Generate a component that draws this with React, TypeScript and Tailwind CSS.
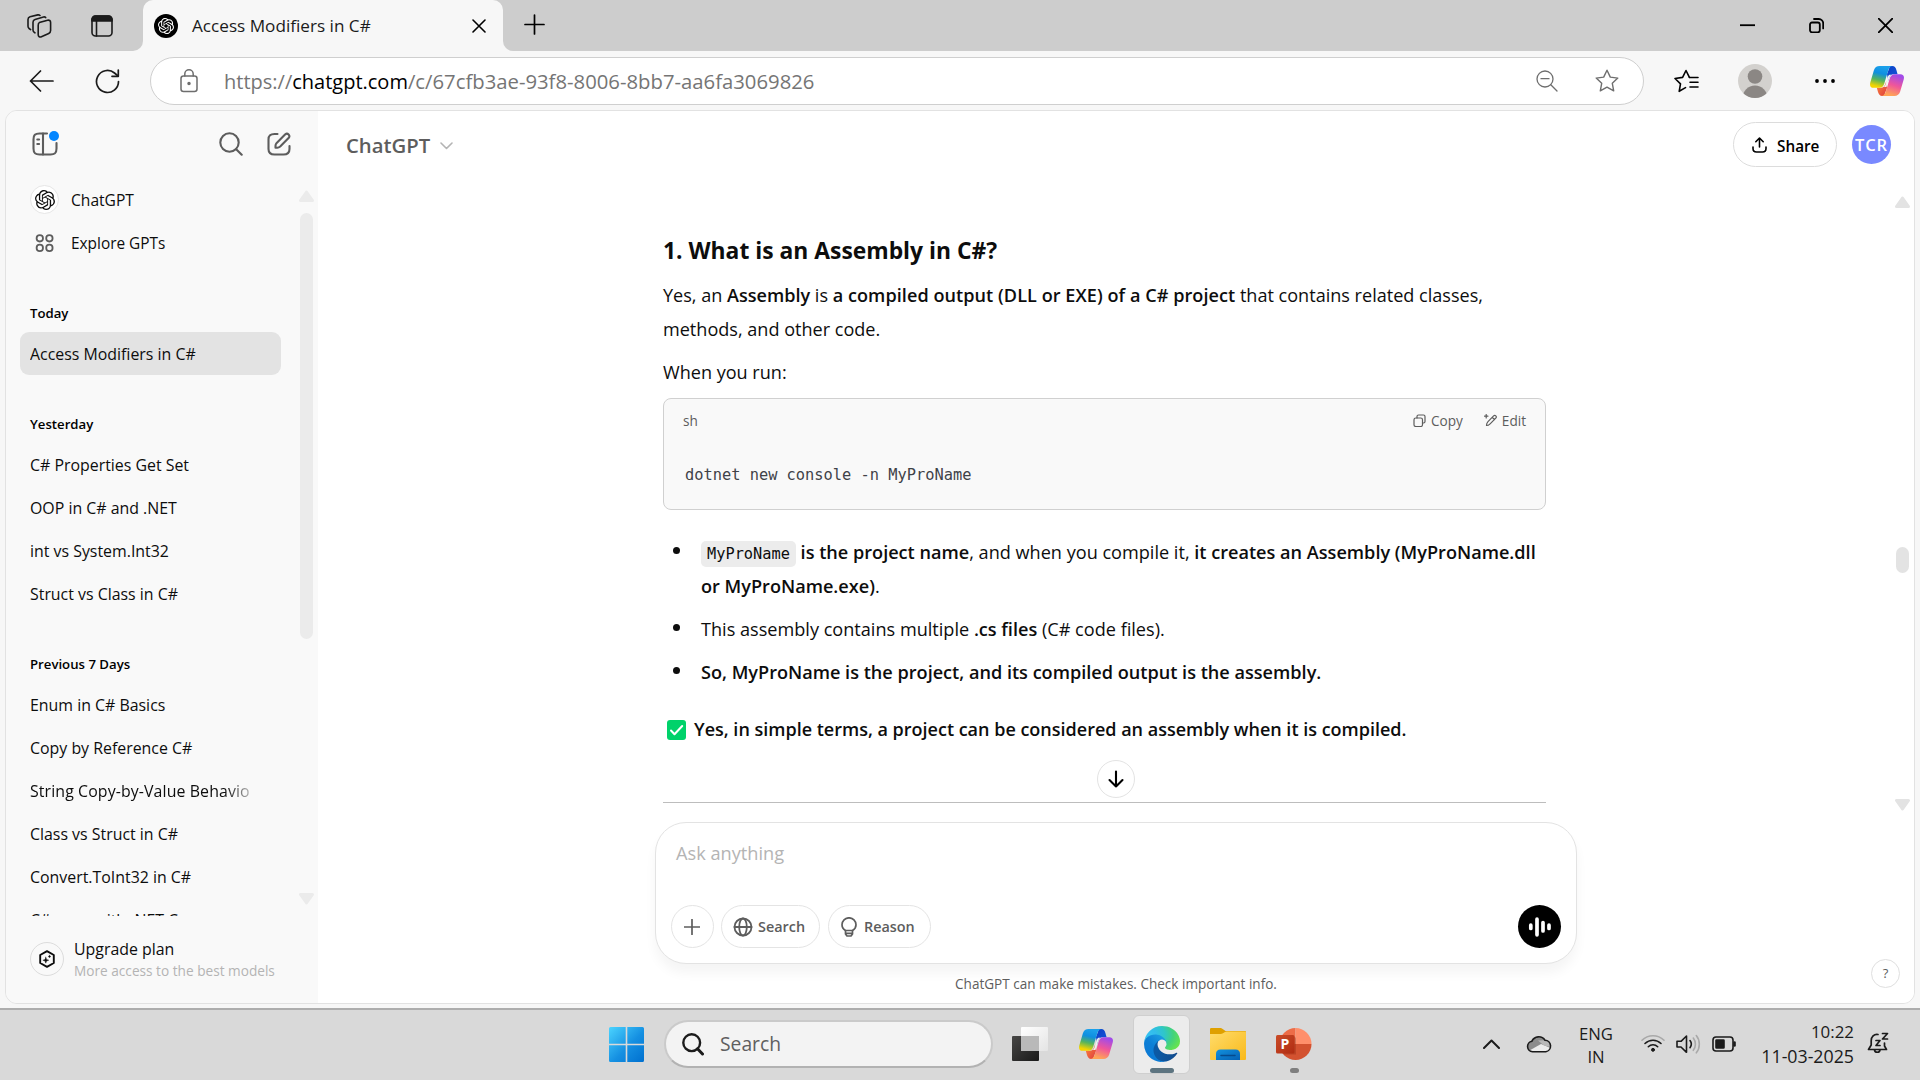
import type { ReactNode } from "react";
import { SiOpenai } from "react-icons/si";

type IconProps = { className?: string };

function Stroke({ className = "", box = "0 0 24 24", width = 1.5, children }: IconProps & { box?: string; width?: number; children: ReactNode }) {
  return (
    <svg className={"shrink-0 " + className} viewBox={box} fill="none" stroke="currentColor" strokeWidth={width} strokeLinecap="round" strokeLinejoin="round">
      {children}
    </svg>
  );
}

function CopilotLogo({ className = "", id }: IconProps & { id: string }) {
  return (
    <svg className={"shrink-0 " + className} viewBox="0 0 34 30">
      <defs>
        <linearGradient id={id + "a"} x1="0.6" y1="0" x2="0.35" y2="1">
          <stop offset="0.05" stopColor="#1ba0ea" />
          <stop offset="0.35" stopColor="#0f8fe0" />
          <stop offset="0.65" stopColor="#57b45c" />
          <stop offset="0.95" stopColor="#f5d400" />
        </linearGradient>
        <linearGradient id={id + "b"} x1="0.7" y1="0" x2="0.35" y2="1">
          <stop offset="0.05" stopColor="#a24be8" />
          <stop offset="0.5" stopColor="#f0569a" />
          <stop offset="0.95" stopColor="#ffa457" />
        </linearGradient>
        <linearGradient id={id + "c"} x1="0" y1="0" x2="1" y2="1">
          <stop offset="0" stopColor="#0c3fc4" />
          <stop offset="1" stopColor="#1458dc" />
        </linearGradient>
        <linearGradient id={id + "d"} x1="0" y1="0" x2="1" y2="1">
          <stop offset="0" stopColor="#ff8a3c" />
          <stop offset="1" stopColor="#dd3c3f" />
        </linearGradient>
      </defs>
      <path d="M20 0h2.200c2.400 0 3.500 1.600 4.200 4l1.200 4.200h-4c-2.600 0-3.800 1.600-4.500 3.700l-1 3L17 8z" fill={`url(#${id}c)`} />
      <path d="M14 30h-1.800c-2.400 0-3.500-1.700-4.200-4l-1.200-4.300h4c2.600 0 3.800-1.600 4.500-3.700l1-3L17 22z" fill={`url(#${id}d)`} />
      <path d="M9.600 0H22.500c-2.600.3-3.700 2.400-4.400 4.700L14.300 17.500c-.8 2.700-2.300 4.300-5 4.300H3.600C.5 21.800-.5 19.600.3 16.500L3.900 4.200C4.700 1.500 6.700 0 9.600 0z" fill={`url(#${id}a)`} />
      <path d="M24.400 30H11.500c2.600-.3 3.700-2.400 4.400-4.700l3.800-12.800c.8-2.700 2.300-4.300 5-4.300h5.700c3.100 0 4.100 2.200 3.300 5.300l-3.600 12.300c-.8 2.700-2.800 4.200-5.700 4.200z" fill={`url(#${id}b)`} />
      <path d="M19.300 8.800h2c-1.200 1-1.800 2.200-2.300 3.700l-2.600 8.600h-2.700c1-.8 1.600-2 2-3.400l2-6.600c.3-1 .8-1.800 1.600-2.300z" fill="#f1f1f1" />
    </svg>
  );
}

function EdgeLogo({ className = "" }: IconProps) {
  return (
    <svg className={"shrink-0 " + className} viewBox="0 0 256 256">
      <defs>
        <linearGradient id="edgeA" x1="0.2" y1="0.5" x2="1" y2="0.5">
          <stop offset="0" stopColor="#0c59a4" />
          <stop offset="1" stopColor="#114a8b" />
        </linearGradient>
        <linearGradient id="edgeB" x1="0.9" y1="0.2" x2="0.3" y2="1">
          <stop offset="0" stopColor="#1b9de2" />
          <stop offset="0.5" stopColor="#0d7fd6" />
          <stop offset="1" stopColor="#0a78d4" />
        </linearGradient>
        <radialGradient id="edgeC" cx="0.1" cy="0.35" r="0.95">
          <stop offset="0" stopColor="#35c1f1" />
          <stop offset="0.25" stopColor="#32bdea" />
          <stop offset="0.5" stopColor="#2fc6c8" />
          <stop offset="0.75" stopColor="#43d27c" />
          <stop offset="1" stopColor="#66e34f" />
        </radialGradient>
      </defs>
      <path fill="url(#edgeA)" d="M231.100 190.500c-3.400 1.800-6.900 3.400-10.500 4.700a101.900 101.900 0 0 1-35.900 6.500c-47.300 0-88.500-32.500-88.500-74.300a31.500 31.500 0 0 1 16.400-27.300c-42.800 1.800-53.800 46.400-53.800 72.500 0 73.900 68.100 81.400 82.800 81.400 7.900 0 19.800-2.300 27-4.600l1.300-.4a128.300 128.300 0 0 0 66.600-52.800 4 4 0 0 0-5.400-5.700z" />
      <path fill="url(#edgeB)" d="M105.700 241.400a79.200 79.200 0 0 1-22.700-21.300 80.700 80.700 0 0 1 29.600-120c3.100-1.500 8.500-4.100 15.600-4a32.400 32.400 0 0 1 25.700 13 31.900 31.900 0 0 1 6.300 18.700c0-.2 24.500-79.600-80-79.600-43.900 0-80 41.700-80 78.200a130.200 130.200 0 0 0 12.100 56 128 128 0 0 0 156.400 67.100 75.600 75.600 0 0 1-62.800-8.100z" />
      <path fill="url(#edgeC)" d="M152.300 148.900c-.9 1-3.300 2.500-3.300 5.700 0 2.600 1.700 5.100 4.700 7.200 14.400 10 41.500 8.700 41.600 8.700a59.600 59.600 0 0 0 30.300-8.300 61.400 61.400 0 0 0 30.400-52.900c.3-22.400-8-37.300-11.300-43.900C223.500 23.900 177.700 0 128 0A128 128 0 0 0 0 126.200c.5-36.500 36.800-66 80-66 3.500 0 23.500.3 42 10.100 16.300 8.600 24.900 18.900 30.800 29.200 6.200 10.700 7.300 24.100 7.300 29.500s-2.700 13.300-7.800 19.900z" />
    </svg>
  );
}

function Triangle({ className = "", down = false }: IconProps & { down?: boolean }) {
  return (
    <svg className={"shrink-0 h-3 w-[15px] " + className} viewBox="0 0 15 12" fill="currentColor" stroke="currentColor" strokeWidth="3" strokeLinejoin="round">
      <path d={down ? "M1.500 1.500h12l-6 8.500z" : "M1.500 10.500h12l-6-8.500z"} />
    </svg>
  );
}

function TitleBar() {
  return (
    <div className="flex h-[51px] shrink-0 bg-[linear-gradient(#cdcdcd_50%,#f7f7f7_50%)]">
      <div className="flex w-[143px] rounded-br-[10px] bg-[#cdcdcd] pt-[14px] pl-[27px] text-[#1b1b1b]">
        <Stroke box="0 0 25 24" width={1.6} className="h-6 w-[25px]">
          <path d="M12.300 8.600l8.300-2.400c1.600-.4 3 .5 3 2.200v8.200c0 1.300-.6 2.300-1.900 2.900l-7.300 3.300c-1.600.7-3.200-.3-3.200-2v-9.200c0-1.500.2-2.500 1.100-3z" />
          <path d="M8 18.800l-1-.7c-.7-.5-1-1.100-1-2V8.300c0-1.600.7-2.500 2-2.900l8.500-2.400c.9-.2 1.700 0 2.200.6" />
          <path d="M3.600 15.600l-1.500-1.100c-.8-.6-1.100-1.200-1.100-2.200V5.500c0-1.500.7-2.400 2-2.800L10.800.9c.9-.2 1.600 0 2.200.6" />
        </Stroke>
        <Stroke box="0 0 22 22" width={1.6} className="mt-px ml-[39px] size-[22px]">
          <rect x="1" y="1" width="20" height="20" rx="3.500" />
          <path d="M1 6V4.500A3.500 3.500 0 0 1 4.500 1h13A3.500 3.500 0 0 1 21 4.500V6z" fill="currentColor" />
          <path d="M5.500 6v15" />
        </Stroke>
      </div>
      <div className="flex w-[360px] items-center rounded-t-[10px] bg-[#f7f7f7] pr-[17px] pl-[11px]">
        <span className="flex size-6 items-center justify-center rounded-full bg-black text-white">
          <SiOpenai className="size-4" />
        </span>
        <span className="mt-px ml-[14px] flex-1 text-[17.150px] whitespace-nowrap text-[#1b1b1b]">Access Modifiers in C#</span>
        <Stroke box="0 0 14 14" width={1.6} className="mt-px size-[14px]">
          <path d="M1 1l12 12M13 1L1 13" />
        </Stroke>
      </div>
      <div className="flex flex-1 rounded-bl-[10px] bg-[#cdcdcd] pl-[21px] text-black">
        <Stroke box="0 0 21 21" width={1.7} className="mt-[14px] size-[21px]">
          <path d="M10.500 1v19M1 10.500h19" />
        </Stroke>
        <div className="ml-auto flex gap-[54px] pt-[18px] pr-[27px]">
          <Stroke box="0 0 15 15" width={1.8} className="size-[15px]">
            <path d="M0 7.200h15" strokeLinecap="butt" />
          </Stroke>
          <Stroke box="0 0 15 15" width={1.8} className="size-[15px]">
            <rect x="1" y="4.500" width="9.800" height="9.800" rx="2" />
            <path d="M5 1h4.800a4.400 4.400 0 0 1 4.400 4.400v5" />
          </Stroke>
          <Stroke box="0 0 15 15" width={1.8} className="size-[15px]">
            <path d="M.7.7l13.600 13.600M14.300.7L.7 14.300" />
          </Stroke>
        </div>
      </div>
    </div>
  );
}

function Toolbar() {
  return (
    <div className="flex h-[59px] shrink-0 items-start pt-[6px] text-[#1b1b1b]">
      <div className="flex h-12 w-[150px] items-center pl-[29px]">
        <Stroke box="0 0 25 22" width={1.7} className="-mt-px h-[22px] w-[25px]">
          <path d="M24 11H1.500M11.500 1L1.500 11l10 10" />
        </Stroke>
        <Stroke box="0 0 25 25" width={1.7} className="ml-[41px] size-[25px]">
          <path d="M23.500 12.500a11 11 0 1 1-4-8.500l3.500 3" />
          <path d="M23.300 1v6.300h-6.300" />
        </Stroke>
      </div>
      <div className="flex h-12 w-[1494px] items-center rounded-full border border-[#cfcfcf] bg-white pl-[29px] text-[#6e6e6e]">
        <Stroke box="0 0 18 24" width={1.5} className="h-6 w-[18px]">
          <rect x="1" y="7" width="16" height="15.500" rx="2.500" />
          <path d="M4.800 7V5a4.200 4.200 0 0 1 8.400 0v2" />
          <circle cx="9" cy="14.500" r="1" fill="currentColor" />
        </Stroke>
        <span className="ml-[26px] flex-1 text-[20px] whitespace-nowrap text-[#757575]">
          https://<span className="text-black">chatgpt.com</span>
          <span className="text-[20.300px]">/c/67cfb3ae-93f8-8006-8bb7-aa6fa3069826</span>
        </span>
        <Stroke box="0 0 22 22" width={1.3} className="size-[22px]">
          <circle cx="9" cy="9" r="8" />
          <path d="M5 8.700h8M14.800 14.800l6.200 6.200" />
        </Stroke>
        <Stroke box="0 0 24 24" width={1.4} className="mr-6 ml-[37px] size-6">
          <path d="M12 1.200l3.300 6.900 7.500 1-5.500 5.200 1.400 7.500-6.700-3.600-6.700 3.600 1.400-7.500L1.200 9.100l7.500-1z" />
        </Stroke>
      </div>
      <div className="flex h-12 items-center text-black">
        <Stroke box="0 0 25 24" width={1.6} className="ml-[30px] h-6 w-[25px]">
          <path d="M11.500 18.600l-6.300 3.700 1.300-7.500L1 9.500l7.600-1.100L12 1.500l3.400 6.900" />
          <path d="M15.500 8.500h8.500M16 13.300h8M16 18h8" />
        </Stroke>
        <svg viewBox="0 0 34 34" className="ml-[39px] size-[34px]">
          <clipPath id="profile"><circle cx="17" cy="17" r="17" /></clipPath>
          <g clipPath="url(#profile)">
            <rect width="34" height="34" fill="#d3d1ce" />
            <circle cx="17" cy="12.500" r="7.300" fill="#8b8784" />
            <circle cx="17" cy="34" r="12.500" fill="#8b8784" />
          </g>
        </svg>
        <svg viewBox="0 0 20 4" className="ml-[43px] h-1 w-5">
          <circle cx="2" cy="2" r="1.900" /><circle cx="10" cy="2" r="1.900" /><circle cx="18" cy="2" r="1.900" />
        </svg>
        <CopilotLogo id="cpTop" className="ml-[35px] h-[30px] w-[34px]" />
      </div>
    </div>
  );
}

const yesterday = ["C# Properties Get Set", "OOP in C# and .NET", "int vs System.Int32", "Struct vs Class in C#"];
const previous = ["Enum in C# Basics", "Copy by Reference C#", "String Copy-by-Value Behavior", "Class vs Struct in C#", "Convert.ToInt32 in C#", "C# apps with .NET Core"];

function Chat({ title, active = false }: { title: string; active?: boolean }) {
  return (
    <div className={"ml-[14px] flex h-[43px] w-[261px] shrink-0 items-center rounded-[9px] px-[10px] " + (active ? "bg-[#e3e3e3]" : "")}>
      <span className={"mt-0.5 w-[221px] overflow-hidden whitespace-nowrap " + (title.length > 26 ? "tracking-[0.1px] [mask-image:linear-gradient(to_right,black_88%,transparent_104%)]" : "")}>{title}</span>
    </div>
  );
}

function Section({ title, children }: { title: string; children: ReactNode }) {
  return (
    <div className="mt-7">
      <h2 className="flex h-10 items-center pt-[3px] pl-6 text-[13.200px] font-semibold text-black">{title}</h2>
      {children}
    </div>
  );
}

function Sidebar() {
  return (
    <aside className="flex w-[312px] shrink-0 flex-col bg-[#f9f9f9] text-[15.900px] text-[#0d0d0d]">
      <div className="flex h-[67px] shrink-0 items-center pl-[26px] text-[#5d5d5d]">
        <div className="relative size-[26px]">
          <Stroke box="0 0 26 24" width={2.1} className="h-6 w-[26px]">
            <path d="M15 1.500H7.500c-4.500 0-6 1.500-6 6v9c0 4.500 1.500 6 6 6h11c4.500 0 6-1.500 6-6V11" />
            <path d="M11 1.500v21" />
            <path d="M5.300 7.500h1.800M5.300 12h1.800" />
          </Stroke>
          <span className="absolute -top-[1px] left-[17px] size-[10px] rounded-full bg-[#0285ff]" />
        </div>
        <Stroke box="0 0 24 24" width={2.100} className="-mt-px ml-[161px] size-6">
          <circle cx="10.500" cy="10.500" r="9.200" />
          <path d="M17.200 17.200l5.500 5.500" />
        </Stroke>
        <Stroke box="0 0 24 24" width={2.100} className="-mt-px ml-[24px] size-6">
          <path d="M10.500 2H7.500C3.500 2 1.500 3.500 1.500 7.500v9.500c0 4 2 5.500 6 5.500h9c4 0 6-1.500 6-5.500v-3" />
          <path d="M8.500 13.800c0-1.200.4-2 1.200-2.900L18.300 2.300a2.500 2.500 0 0 1 3.500 3.500L13.200 14.500c-.9.8-1.700 1.200-2.900 1.200H8.500z" />
        </Stroke>
      </div>
      <div className="flex h-[738px] shrink-0 overflow-hidden">
        <div className="w-[293px]">
          <div className="flex h-[43px] items-center pl-6">
            <span className="flex size-[29px] items-center justify-center rounded-full border border-[#e6e6e6] bg-white">
              <SiOpenai className="size-5" />
            </span>
            <span className="mt-0.5 ml-3 text-[15.600px]">ChatGPT</span>
          </div>
          <div className="flex h-[43px] items-center pl-6">
            <Stroke box="0 0 28 28" width={1.8} className="size-7 text-[#5d5d5d]">
              <circle cx="9.800" cy="9.300" r="3.200" /><circle cx="19.400" cy="9.300" r="3.200" />
              <circle cx="9.800" cy="18.900" r="3.200" /><circle cx="19.400" cy="18.900" r="3.200" />
            </Stroke>
            <span className="mt-[3px] ml-[13px] text-[15.400px]">Explore GPTs</span>
          </div>
          <Section title="Today"><Chat title="Access Modifiers in C#" active /></Section>
          <Section title="Yesterday">{yesterday.map((t) => <Chat key={t} title={t} />)}</Section>
          <Section title="Previous 7 Days">{previous.map((t) => <Chat key={t} title={t} />)}</Section>
        </div>
        <div className="flex w-[15px] flex-col items-center pt-3 text-[#ebebeb]">
          <Triangle />
          <div className="mt-[11px] h-[426px] w-[13px] rounded-full bg-[#ebebeb]" />
          <Triangle down className="mt-auto mb-[11px]" />
        </div>
      </div>
      <div className="flex flex-1 items-center pl-6">
        <span className="-mt-px flex size-[34px] items-center justify-center rounded-full border border-[#dcdcdc] text-[#0d0d0d]">
          <Stroke box="0 0 18 18" width={1.9} className="size-[18px]">
            <path d="M9 1.200l6.800 3.800v8L9 16.800 2.200 13V5z" />
            <path d="M7.800 7.200l.8 2.200 2.200.8-2.200.8-.8 2.200-.8-2.200-2.200-.8L7 9.400zM11.500 5.200l.4.900.9.400-.9.400-.4.900-.4-.9-.9-.4.900-.4z" fill="currentColor" strokeWidth=".4" />
          </Stroke>
        </span>
        <div className="mt-px ml-[10px] flex flex-col">
          <span className="h-[21px] leading-[21px]">Upgrade plan</span>
          <span className="h-[21px] text-[13.650px] leading-[21px] text-[#b4b4b4]">More access to the best models</span>
        </div>
      </div>
    </aside>
  );
}

function B({ children }: { children: ReactNode }) {
  return <strong className="font-semibold">{children}</strong>;
}

function Bullet({ children }: { children: ReactNode }) {
  return (
    <li className="flex">
      <span className="mt-3 ml-[10px] size-[7px] shrink-0 rounded-full bg-[#0d0d0d]" />
      <div className="ml-[21px] whitespace-nowrap">{children}</div>
    </li>
  );
}

function Answer() {
  return (
    <article className="w-[883px] pt-[55px] text-[18.070px] leading-[33.600px] text-[#0d0d0d]">
      <h3 className="h-9 text-[22.850px] leading-9 font-bold">1. What is an Assembly in C#?</h3>
      <p className="mt-[10px] whitespace-nowrap">
        Yes, an <B>Assembly</B> is <B><span className="tracking-[0.06px]">a compiled output (DLL or EXE) of a C# project</span></B> that contains related classes,
        <br />methods, and other code.
      </p>
      <p className="mt-[10px]">When you run:</p>
      <div className="mt-[8px] h-[112px] rounded-[8px] border border-[#d0d0d0] bg-[#f9f9f9] text-[#5d5d5d]">
        <div className="flex h-[44px] items-center pr-[19px] pl-[19px] text-[13.600px]">
          <span>sh</span>
          <Stroke box="0 0 13 13" width={1.200} className="ml-auto size-[13px]">
            <rect x="1" y="4" width="8.500" height="8.500" rx="1.800" />
            <path d="M4 4V2.500C4 1.500 4.500 1 5.500 1h5c1 0 1.500.5 1.500 1.500V7.500C12 8.500 11.500 9 10.500 9H9.500" />
          </Stroke>
          <span className="mt-px ml-[5px]">Copy</span>
          <Stroke box="0 0 13 13" width={1.200} className="ml-[21px] size-[13px]">
            <path d="M2.500 11.500c0-2 .3-2.700 1.500-3.900l5.600-5.700a1.500 1.500 0 0 1 2.200 2.200L6.100 9.800c-1.200 1.200-1.700 1.700-3.600 1.700zM8.300 3.300l2.200 2.200" />
            <path d="M2.200.5v3.400M.5 2.200h3.400" />
          </Stroke>
          <span className="mt-px ml-[5px]">Edit</span>
        </div>
        <pre className="mt-[18px] pl-[21px] font-['DejaVu_Sans_Mono',monospace] text-[15.350px] leading-7 text-[#3f4248]">dotnet new console -n MyProName</pre>
      </div>
      <ul className="mt-[25px] flex flex-col gap-[9px] text-[18.110px] leading-[34px]">
        <Bullet>
          <code className="rounded-[5px] bg-[#ececec] px-[6px] py-[4px] font-['DejaVu_Sans_Mono',monospace] text-[15.300px] leading-none">MyProName</code>{" "}
          <B>is the project name</B>, and when you compile it, <B>it creates an Assembly (MyProName.dll<br />or MyProName.exe)</B>.
        </Bullet>
        <Bullet>This assembly contains multiple <B>.cs files</B> (C# code files).</Bullet>
        <Bullet><B>So, MyProName is the project, and its compiled output is the assembly.</B></Bullet>
      </ul>
      <p className="mt-[24px] flex items-center text-[18px] whitespace-nowrap">
        <svg viewBox="0 0 19 20" className="ml-1 h-5 w-[19px]">
          <rect width="19" height="20" rx="3" fill="#00d26a" />
          <path d="M4 10.500l3.500 3.700L15.200 6" fill="none" stroke="#fff" strokeWidth="2" strokeLinecap="round" strokeLinejoin="round" />
        </svg>
        <span className="ml-2"><B>Yes, in simple terms, a project can be considered an assembly when it is compiled.</B></span>
      </p>
      <hr className="mt-[56px] border-[#bdbdbd]" />
    </article>
  );
}

function Pill({ className = "", children }: IconProps & { children: ReactNode }) {
  return <button className={"flex h-[43px] items-center rounded-full border border-[#e4e4e4] text-[14.400px] font-semibold text-[#5d5d5d] " + className}>{children}</button>;
}

function Composer() {
  return (
    <div className="flex h-[181px] shrink-0 flex-col items-center">
      <div className="flex h-[142px] w-[922px] flex-col justify-between rounded-[31px] border border-[#e3e3e3] bg-white pt-[15px] pr-[15px] pb-[15px] pl-[15px] shadow-[0_9px_12px_rgba(0,0,0,0.045)]">
        <div className="pl-[5px] text-[18.200px] leading-[31px] text-[#b4b4b4]">Ask anything</div>
        <div className="flex items-center">
          <Pill className="w-[43px] justify-center pr-px">
            <Stroke box="0 0 16 16" width={1.700} className="size-4"><path d="M8 .5v15M.5 8h15" /></Stroke>
          </Pill>
          <Pill className="ml-[7px] w-[99px] pl-[11px]">
            <Stroke box="0 0 20 20" width={1.800} className="size-5">
              <circle cx="10" cy="10" r="8.500" /><ellipse cx="10" cy="10" rx="3.800" ry="8.500" /><path d="M1.500 10h17" />
            </Stroke>
            <span className="ml-[5px]">Search</span>
          </Pill>
          <Pill className="ml-2 w-[103px] pl-3">
            <Stroke box="0 0 16 20" width={1.700} className="h-5 w-4">
              <path d="M4.500 13.500C2.300 12.200 1 10.200 1 7.800a7 7 0 0 1 14 0c0 2.400-1.300 4.400-3.500 5.700z" />
              <path d="M4.500 13.500v3.500l1.500 2h4l1.500-2v-3.500M4.800 16.300h6.400" />
            </Stroke>
            <span className="ml-[7px]">Reason</span>
          </Pill>
          <button className="ml-auto flex size-[43px] items-center justify-center rounded-full bg-black text-white">
            <Stroke box="0 0 24 20" width={3.700} className="h-5 w-6"><path d="M2.800 8.200v3.300M9 2.200v15.600M15 5.500v8.500M21 8.200v3.300" /></Stroke>
          </button>
        </div>
      </div>
      <p className="mt-[10px] text-[13.550px] leading-5 text-[#5d5d5d]">ChatGPT can make mistakes. Check important info.</p>
    </div>
  );
}

function Main() {
  return (
    <main className="relative flex flex-1 flex-col bg-white">
      <header className="flex h-[67px] shrink-0 items-center pr-[23px] pl-[28px]">
        <span className="mt-px text-[20.300px] font-semibold text-[#5d5d5d]">ChatGPT</span>
        <Stroke box="0 0 13 8" width={1.600} className="mt-[3px] ml-[10px] h-2 w-[13px] text-[#b4b4b4]"><path d="M1 1l5.500 5.500L12 1" /></Stroke>
        <button className="ml-auto flex h-[45px] w-[104px] items-center rounded-full border border-[#dcdcdc] pl-[18px] text-[15.300px] font-semibold">
          <Stroke box="0 0 15 16" width={1.600} className="h-4 w-[15px]"><path d="M7.500 10V1.300M3.800 4.700l3.700-3.700 3.700 3.700M1 10v1.500C1 14 2 15 4.500 15h6c2.500 0 3.500-1 3.500-3.500V10" /></Stroke>
          <span className="mt-[3px] ml-[10px]">Share</span>
        </button>
        <span className="ml-[15px] flex size-[39px] items-center justify-center rounded-full bg-[#7989ff] pt-[2px] text-[16.500px] font-semibold tracking-[0.9px] text-white">TCR</span>
      </header>
      <div className="flex h-[644px] shrink-0 overflow-hidden">
        <div className="flex flex-1 justify-center"><Answer /></div>
        <div className="flex w-[23px] flex-col items-center pt-[18px] text-[#e3e3e3]">
          <Triangle />
          <div className="mt-[339px] h-[26px] w-[13px] rounded-full bg-[#e3e3e3]" />
          <Triangle down className="mt-auto mb-[11px]" />
        </div>
      </div>
      <Composer />
      <button className="absolute top-[649px] left-[779px] flex size-[38px] items-center justify-center rounded-full border border-[#e3e3e3] bg-white">
        <Stroke box="0 0 16 18" width={2.100} className="h-[18px] w-4"><path d="M8 1.500v15M1.500 10L8 16.500 14.500 10" /></Stroke>
      </button>
      <button className="absolute right-[14px] bottom-[15px] flex size-[29px] items-center justify-center rounded-full border border-[#dfdfdf] text-[13px] text-[#5d5d5d]">?</button>
    </main>
  );
}

function Taskbar() {
  return (
    <footer className="flex h-[70px] shrink-0 bg-[#d9d9d9] text-[#1b1b1b]">
      <svg viewBox="0 0 35 35" className="mt-[17px] ml-[609px] size-[35px] shrink-0">
        <defs>
          <linearGradient id="win" gradientUnits="userSpaceOnUse" x1="0" y1="0" x2="35" y2="35">
            <stop offset="0" stopColor="#4bd4ff" /><stop offset="0.55" stopColor="#1590e2" /><stop offset="1" stopColor="#0070cf" />
          </linearGradient>
        </defs>
        <path fill="url(#win)" d="M1.500 0H16.700V16.700H0V1.500A1.500 1.500 0 0 1 1.500 0zM18.300 0h15.200A1.500 1.500 0 0 1 35 1.500V16.700H18.300zM0 18.300h16.700V35H1.500A1.500 1.500 0 0 1 0 33.500zM18.300 18.300H35v15.200a1.500 1.500 0 0 1-1.500 1.500H18.300z" />
      </svg>
      <div className="mt-[10px] ml-[20px] flex h-12 w-[329px] shrink-0 items-center rounded-full border-2 border-[#cacaca] border-b-[#b2b2b2] bg-[#f3f3f3] pl-4">
        <Stroke box="0 0 22 23" width={2.400} className="h-[23px] w-[22px]">
          <circle cx="9.700" cy="9.700" r="8.400" /><path d="M15.500 15.800l5 5.200" strokeWidth="3" />
        </Stroke>
        <span className="mt-px ml-[16px] text-[19.300px] text-[#5f5f5f]">Search</span>
      </div>
      <svg viewBox="0 0 36 34" className="mt-[17px] ml-[19px] h-[34px] w-9 shrink-0">
        <defs>
          <linearGradient id="tvA" x1="0" y1="0" x2="1" y2="1"><stop offset="0" stopColor="#474645" /><stop offset="1" stopColor="#191919" /></linearGradient>
          <linearGradient id="tvB" x1="0" y1="0" x2="1" y2="1"><stop offset="0" stopColor="#fff" /><stop offset="1" stopColor="#e4e4e4" /></linearGradient>
        </defs>
        <rect y="9" width="27" height="25" rx="1" fill="url(#tvA)" />
        <rect x="9" width="27" height="24" rx="1" fill="url(#tvB)" />
        <rect x="9" y="9" width="18" height="15" fill="#b9b9b9" />
      </svg>
      <CopilotLogo id="cpTask" className="mt-[19px] ml-[31px] h-[30px] w-[34px]" />
      <div className="mt-[5px] ml-[20px] flex h-[59px] w-[57px] shrink-0 flex-col items-center rounded-[6px] border border-[#cfcfcf] bg-[#ececec] pt-[10px]">
        <EdgeLogo className="size-9" />
        <span className="mt-[6px] h-[5px] w-6 shrink-0 rounded-full bg-[#5d7480]" />
      </div>
      <svg viewBox="0 0 36 33" className="mt-[18px] ml-5 h-[33px] w-9 shrink-0">
        <defs>
          <linearGradient id="fold" x1="0" y1="0" x2="1" y2="1"><stop offset="0" stopColor="#ffdc6b" /><stop offset="1" stopColor="#f9b91a" /></linearGradient>
          <linearGradient id="foldB" x1="0" y1="0" x2="1" y2="1"><stop offset="0" stopColor="#1292de" /><stop offset="1" stopColor="#0560b4" /></linearGradient>
        </defs>
        <path d="M0 1.200Q0 0 1.200 0H10.500q1 0 1.800.7L15.500 3H35q1 0 1 1v10H0z" fill="#dfa000" />
        <path d="M0 6h10.500q1.500 0 2.500-.8L15 4q.6-.5 1.500-.5H35q1 0 1 1V31q0 1-1 1H1q-1 0-1-1z" fill="url(#fold)" />
        <path d="M6 32V26q0-4.500 4.500-4.500h15Q30 21.500 30 26v6z" fill="url(#foldB)" />
        <path d="M11 27.500h14" stroke="#064a8c" strokeWidth="1.500" strokeLinecap="round" />
      </svg>
      <div className="mt-[18px] ml-[30px] flex w-9 shrink-0 flex-col">
        <div className="relative h-[33px] w-9">
          <svg viewBox="0 0 36 33" className="h-[33px] w-9">
            <defs><linearGradient id="ppt" x1="0" y1="0" x2="1" y2="1"><stop offset="0" stopColor="#ca4c28" /><stop offset="1" stopColor="#b02c12" /></linearGradient></defs>
            <path d="M19.500 0a16 16 0 0 0-16 16h16z" fill="#ed6c47" />
            <path d="M19.500 0a16 16 0 0 1 16 16h-16z" fill="#ff8f6b" />
            <path d="M3.500 16h32a16 16 0 0 1-32 0z" fill="#d35230" />
            <path d="M3.500 9H18.500q1.500 0 1.500 1.500V26.500H8A16 16 0 0 1 3.500 16z" fill="#8f2a10" opacity=".35" />
            <rect y="7" width="18.500" height="18.500" rx="1.500" fill="url(#ppt)" />
          </svg>
          <span className="absolute top-[7px] left-0 w-[18px] text-center text-[14px] leading-[18px] font-bold text-white">P</span>
        </div>
        <span className="mt-[7px] ml-[14px] h-[5px] w-[9px] rounded-full bg-[#7f7f7f]" />
      </div>
      <div className="ml-auto flex items-start text-[16.700px]">
        <Stroke box="0 0 17 10" width={2} className="mt-[29px] h-[10px] w-[17px]"><path d="M1 9l7.500-7.500L16 9" /></Stroke>
        <svg viewBox="0 0 26 18" className="mt-[25px] ml-[26px] h-[18px] w-[26px]">
          <path d="M6.500 16.700a5.300 5.300 0 0 1-.6-10.500A7.500 7.500 0 0 1 19 5.200a5.800 5.800 0 0 1 .8 11.500z" fill="#8c8c8c" />
          <path d="M3.500 15.500L15 9l9.500 4c-.8 2.300-2.500 3.700-4.700 3.700H6.500z" fill="#ececec" />
          <path d="M12 5.500l6 5 6.500 1.500c.3-4-1.800-6.400-5.500-6.800z" fill="#b9b9b9" />
          <path d="M6.500 16.700a5.300 5.300 0 0 1-.6-10.500A7.500 7.500 0 0 1 19 5.200a5.800 5.800 0 0 1 .8 11.500z" fill="none" stroke="#1b1b1b" strokeWidth="1.600" />
        </svg>
        <div className="mt-[12px] ml-[26px] w-[36px] text-center leading-[23px]"><div>ENG</div><div>IN</div></div>
        <Stroke box="0 0 24 18" width={1.600} className="mt-[24px] ml-[27px] h-[18px] w-6">
          <path d="M1 6.300a15.500 15.500 0 0 1 22 0" stroke="#a9a9a9" />
          <path d="M4 9.500a11.300 11.300 0 0 1 16 0M7.300 12.700a6.700 6.700 0 0 1 9.400 0" />
          <circle cx="12" cy="15.800" r="1.500" fill="currentColor" strokeWidth="1" />
        </Stroke>
        <Stroke box="0 0 25 20" width={1.600} className="mt-[24px] ml-[11px] h-5 w-[25px]">
          <path d="M1 7.300h4L10.500 2v16.300L5 13H1z" />
          <path d="M14 6.500c1.600 2 1.600 5 0 7.200" />
          <path d="M17.300 4c2.800 3.500 2.800 8.800 0 12.300M20.300 1.500c4 4.800 4 12.600 0 17.300" stroke="#a9a9a9" />
        </Stroke>
        <Stroke box="0 0 25 16" width={1.600} className="mt-[26px] ml-[11px] h-4 w-[25px]">
          <rect x="1" y="1" width="20" height="14" rx="3" />
          <rect x="4" y="4" width="8" height="8" rx=".5" fill="currentColor" />
          <path d="M22.500 6.500v3" strokeWidth="2.600" />
        </Stroke>
        <div className="mt-[10px] ml-[24px] w-[93px] text-right leading-6"><div className="text-[16.900px]">10:22</div><div className="text-[17.800px] tracking-[-0.01px] whitespace-nowrap">11-03-2025</div></div>
        <Stroke box="0 0 22 22" width={1.700} className="mt-[22px] mr-[31px] ml-[13px] size-[22px]">
          <path d="M11 2.500C7 1.800 4.200 5 4.200 8.800V13L1.500 17.500h18L17.500 14v-3M7.500 18c.5 3 5 3 5.500 0" />
          <path d="M9 8.500h4l-4 5h4M15.500 1.500h5l-5 5.500h5" />
        </Stroke>
      </div>
    </footer>
  );
}

export default function App() {
  return (
    <div className="flex h-[1080px] w-[1920px] flex-col overflow-hidden bg-[#f7f7f7] font-['Open_Sans',sans-serif]">
      <TitleBar />
      <Toolbar />
      <div className="mr-[5px] mb-[4px] ml-[5px] flex h-[894px] shrink-0 overflow-hidden rounded-[12px] border border-[#e2e2e2]">
        <Sidebar />
        <Main />
      </div>
      <div className="h-0.5 shrink-0 bg-[#adadad]" />
      <Taskbar />
    </div>
  );
}
